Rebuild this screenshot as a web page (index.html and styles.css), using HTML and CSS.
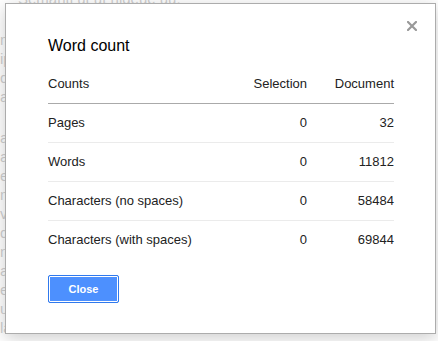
FILE: index.html
```html
<!DOCTYPE html>
<html>
<head>
<meta charset="utf-8">
<link rel="stylesheet" href="styles.css">
</head>
<body>
<div class="doc" aria-hidden="true">
  <p class="doc-line top">Semanti ut ut nigeue uu.</p>
  <p class="doc-para">m lorem ipsum dolor sit amet</p>
  <p class="doc-para">a magna aliqua ut enim ad minim veniam quis nostrud ag exercitation ullamco laboris e nisi ut aliquip ex ea commodo</p>
  <p class="doc-para">a lorem ipsum dolor sit amet, - consectetur adipiscing elit sed</p>
  <p class="doc-para bottom">s ullamco laboris nisi ut g aliquip ex ea commodo veret</p>
</div>
<div class="overlay"></div>
<div class="dialog" role="dialog">
  <button class="close-x" aria-label="Close">
    <svg width="10" height="10" viewBox="0 0 10 10"><path d="M1 1L9 9M9 1L1 9" stroke="#999" stroke-width="2.2" stroke-linecap="square" fill="none"/></svg>
  </button>
  <h1 class="title">Word count</h1>
  <div class="table">
    <div class="row head">
      <div class="c-label">Counts</div>
      <div class="c-num">Selection</div>
      <div class="c-num">Document</div>
    </div>
    <div class="row">
      <div class="c-label">Pages</div>
      <div class="c-num">0</div>
      <div class="c-num">32</div>
    </div>
    <div class="row">
      <div class="c-label">Words</div>
      <div class="c-num">0</div>
      <div class="c-num">11812</div>
    </div>
    <div class="row">
      <div class="c-label">Characters (no spaces)</div>
      <div class="c-num">0</div>
      <div class="c-num">58484</div>
    </div>
    <div class="row last">
      <div class="c-label">Characters (with spaces)</div>
      <div class="c-num">0</div>
      <div class="c-num">69844</div>
    </div>
  </div>
  <div class="buttons">
    <button class="btn-primary">Close</button>
  </div>
</div>
</body>
</html>
```

FILE: styles.css
```css
html, body {
  margin: 0;
  padding: 0;
}
body {
  width: 438px;
  height: 341px;
  overflow: hidden;
  background: #ffffff;
  font-family: Arial, "Liberation Sans", sans-serif;
  position: relative;
}
.doc {
  width: 438px;
  height: 341px;
  overflow: hidden;
  color: #8a8a8a;
  font-size: 15px;
  line-height: 19px;
}
.doc p {
  margin: 0 0 22px 0;
  width: 60px;
}
.doc .top {
  margin-top: -11px;
  margin-left: 18px;
  width: 300px;
}
.overlay {
  position: absolute;
  inset: 0;
  background: rgba(255, 255, 255, 0.6);
}
.dialog {
  position: absolute;
  left: 5px;
  top: 3px;
  width: 431px;
  height: 331px;
  box-sizing: border-box;
  background: #fff;
  border: 1px solid #acacac;
  box-shadow: 0 4px 16px rgba(0, 0, 0, 0.2);
  display: flex;
  flex-direction: column;
  padding: 32px 41px 0 42px;
}
.close-x {
  position: absolute;
  top: 17px;
  right: 18px;
  width: 10px;
  height: 10px;
  padding: 0;
  border: 0;
  background: none;
  display: block;
}
.close-x svg {
  display: block;
}
.title {
  margin: 0;
  font-size: 16px;
  font-weight: normal;
  line-height: 20px;
  color: #000;
}
.table {
  margin-top: 20px;
  font-size: 13px;
  line-height: 16px;
  color: #222;
}
.row {
  display: grid;
  grid-template-columns: 1fr 80px 87px;
  padding: 11px 0;
  border-bottom: 1px solid #ebebeb;
}
.row.head {
  border-bottom: 1px solid #aaaaaa;
  padding-top: 0;
}
.row.last {
  border-bottom: 0;
}
.c-num {
  text-align: right;
}
.buttons {
  margin-top: 16px;
}
.btn-primary {
  width: 71px;
  height: 28px;
  padding: 0;
  font-family: Arial, "Liberation Sans", sans-serif;
  font-size: 11px;
  font-weight: bold;
  color: #fff;
  background: #4d90fe;
  border: 1px solid #3079ed;
  border-radius: 2px;
  box-shadow: inset 0 0 0 1px #fff;
}
```
